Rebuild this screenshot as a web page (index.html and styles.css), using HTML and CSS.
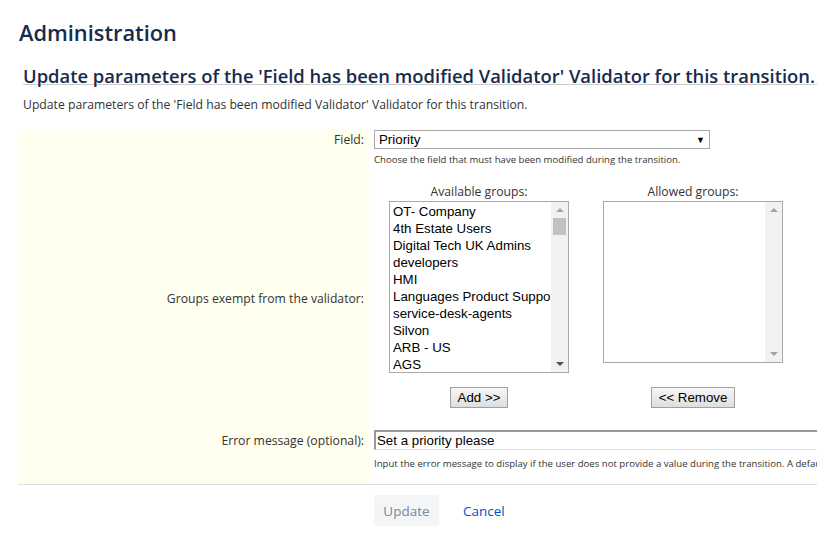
FILE: index.html
```html
<!DOCTYPE html>
<html>
<head>
<meta charset="utf-8">
<link rel="stylesheet" href="styles.css">
</head>
<body>
<div class="page">
  <h1 class="title">Administration</h1>
  <h2 class="subtitle">Update parameters of the 'Field has been modified Validator' Validator for this transition.</h2>
  <p class="intro">Update parameters of the 'Field has been modified Validator' Validator for this transition.</p>

  <div class="form">
    <div class="label label-top">Field:</div>
    <div class="value value-field">
      <div class="select"><span class="select-text">Priority</span><span class="select-arrow">&#9660;</span></div>
      <div class="hint">Choose the field that must have been modified during the transition.</div>
    </div>

    <div class="label label-middle">Groups exempt from the validator:</div>
    <div class="value value-groups">
      <div class="group-col">
        <div class="group-caption">Available groups:</div>
        <div class="listbox listbox-tall">
          <div class="list-items">
            <div class="list-item">OT- Company</div>
            <div class="list-item">4th Estate Users</div>
            <div class="list-item">Digital Tech UK Admins</div>
            <div class="list-item">developers</div>
            <div class="list-item">HMI</div>
            <div class="list-item">Languages Product Support</div>
            <div class="list-item">service-desk-agents</div>
            <div class="list-item">Silvon</div>
            <div class="list-item">ARB - US</div>
            <div class="list-item">AGS</div>
          </div>
          <div class="scrollbar">
            <span class="arrow arrow-up"></span>
            <span class="thumb"></span>
            <span class="track-fill"></span>
            <span class="arrow arrow-down"></span>
          </div>
        </div>
        <button class="btn">Add &gt;&gt;</button>
      </div>
      <div class="group-col">
        <div class="group-caption">Allowed groups:</div>
        <div class="listbox listbox-short">
          <div class="list-items"></div>
          <div class="scrollbar">
            <span class="arrow arrow-up"></span>
            <span class="track-fill"></span>
            <span class="arrow arrow-down arrow-dim"></span>
          </div>
        </div>
        <button class="btn">&lt;&lt; Remove</button>
      </div>
    </div>

    <div class="label label-error">Error message (optional):</div>
    <div class="value value-error">
      <input class="text-input" type="text" value="Set a priority please">
      <div class="hint hint-nowrap">Input the error message to display if the user does not provide a value during the transition. A default message will be used if none is provided.</div>
    </div>
  </div>

  <div class="actions">
    <button class="btn-update">Update</button>
    <a class="cancel" href="#">Cancel</a>
  </div>
</div>
</body>
</html>
```

FILE: styles.css
```css
html, body {
  margin: 0;
  padding: 0;
  background: #ffffff;
  overflow: hidden;
}
body {
  font-family: "Open Sans", "Noto Sans", sans-serif;
  color: #172b4d;
  width: 817px;
  height: 543px;
}
.page {
  padding-left: 18px;
  width: 900px;
}
.title {
  margin: 0;
  padding-top: 18px;
  font-size: 21.8px;
  font-weight: 600;
  line-height: 30px;
  color: #172b4d;
  padding-left: 1px;
}
.subtitle {
  margin: 19px 0 0 5px;
  font-size: 18.4px;
  font-weight: 600;
  line-height: 17px;
  color: #172b4d;
  border-bottom: 1px solid #cccccc;
  padding-bottom: 0;
  width: 900px;
  white-space: nowrap;
}
.intro {
  margin: 12px 0 0 5px;
  font-size: 12.2px;
  line-height: 16px;
  color: #333333;
  white-space: nowrap;
}
.form {
  margin-top: 16px;
  display: grid;
  grid-template-columns: 351px 1fr;
  width: 799px;
  border-bottom: 1px solid #dddddd;
}
.label {
  background: #ffffef;
  text-align: right;
  padding-right: 5px;
  font-size: 12.2px;
  line-height: 17px;
  color: #333333;
}
.label-top {
  padding-top: 2px;
}
.label-middle {
  display: flex;
  align-items: center;
  justify-content: flex-end;
  padding-top: 6px;
}
.label-error {
  padding-top: 12px;
}
.value {
  padding-left: 5px;
}
.value-field {
  padding-top: 1px;
  height: 40px;
}
.select {
  width: 334px;
  height: 17px;
  border: 1px solid #a9a9a9;
  display: flex;
  align-items: center;
  justify-content: space-between;
  font-family: "Liberation Sans", Arial, sans-serif;
  font-size: 13.3px;
  color: #000000;
}
.select-text {
  padding-left: 4px;
}
.select-arrow {
  font-size: 9px;
  padding-right: 4px;
  color: #000;
}
.hint {
  font-size: 9.6px;
  color: #333333;
  margin-top: 5px;
  line-height: 12px;
}
.hint-nowrap {
  white-space: nowrap;
  margin-top: 8px;
}
.value-groups {
  display: flex;
  gap: 34px;
  padding-left: 20px;
  height: 250px;
}
.group-col {
  display: flex;
  flex-direction: column;
  align-items: center;
  width: 180px;
}
.group-caption {
  font-size: 12.2px;
  color: #333333;
  line-height: 16px;
  height: 16px;
  margin-top: 14px;
  margin-bottom: 1px;
}
.listbox {
  width: 178px;
  border: 1px solid #a9a9a9;
  display: flex;
  background: #fff;
}
.listbox-tall {
  height: 170px;
}
.listbox-short {
  height: 160px;
  margin-bottom: 10px;
}
.list-items {
  flex: 1;
  overflow: hidden;
  font-family: "Liberation Sans", Arial, sans-serif;
  font-size: 13.3px;
  color: #000000;
  padding-left: 3px;
  padding-top: 1px;
}
.list-item {
  line-height: 17px;
  height: 17px;
  white-space: nowrap;
}
.scrollbar {
  width: 17px;
  background: #f1f1f1;
  display: flex;
  flex-direction: column;
  align-items: center;
}
.arrow {
  width: 0;
  height: 0;
  border-left: 4px solid transparent;
  border-right: 4px solid transparent;
  margin: 6px 0;
}
.arrow-up {
  border-bottom: 4px solid #a3a3a3;
}
.arrow-down {
  border-top: 4px solid #505050;
}
.arrow-dim.arrow-down {
  border-top-color: #a3a3a3;
}
.thumb {
  width: 13px;
  height: 17px;
  background: #c1c1c1;
}
.track-fill {
  flex: 1;
}
.btn {
  margin-top: 14px;
  height: 21px;
  padding: 0 7px;
  font-family: "Liberation Sans", Arial, sans-serif;
  font-size: 13.3px;
  color: #000;
  background: linear-gradient(#f6f6f6, #dedede);
  border: 1px solid #a0a0a0;
  border-radius: 0;
}
.value-error {
  padding-top: 10px;
  height: 54px;
}
.text-input {
  display: block;
  width: 460px;
  height: 20px;
  box-sizing: border-box;
  border-style: solid;
  border-width: 2px 1px 1px 2px;
  border-color: #999999 #e3e3e3 #e3e3e3 #999999;
  font-family: "Liberation Sans", Arial, sans-serif;
  font-size: 13.3px;
  color: #000;
  padding: 0 1px;
  margin: 0;
  outline: none;
}
.actions {
  display: flex;
  align-items: center;
  padding-left: 356px;
  padding-top: 10px;
  gap: 24px;
}
.btn-update {
  width: 65px;
  height: 31px;
  background: #f4f5f7;
  border: none;
  border-radius: 3px;
  font-family: "Open Sans", "Noto Sans", sans-serif;
  font-size: 13.5px;
  color: #7a869a;
  padding: 0;
}
.cancel {
  font-size: 13.5px;
  color: #0052cc;
  text-decoration: none;
}
```
